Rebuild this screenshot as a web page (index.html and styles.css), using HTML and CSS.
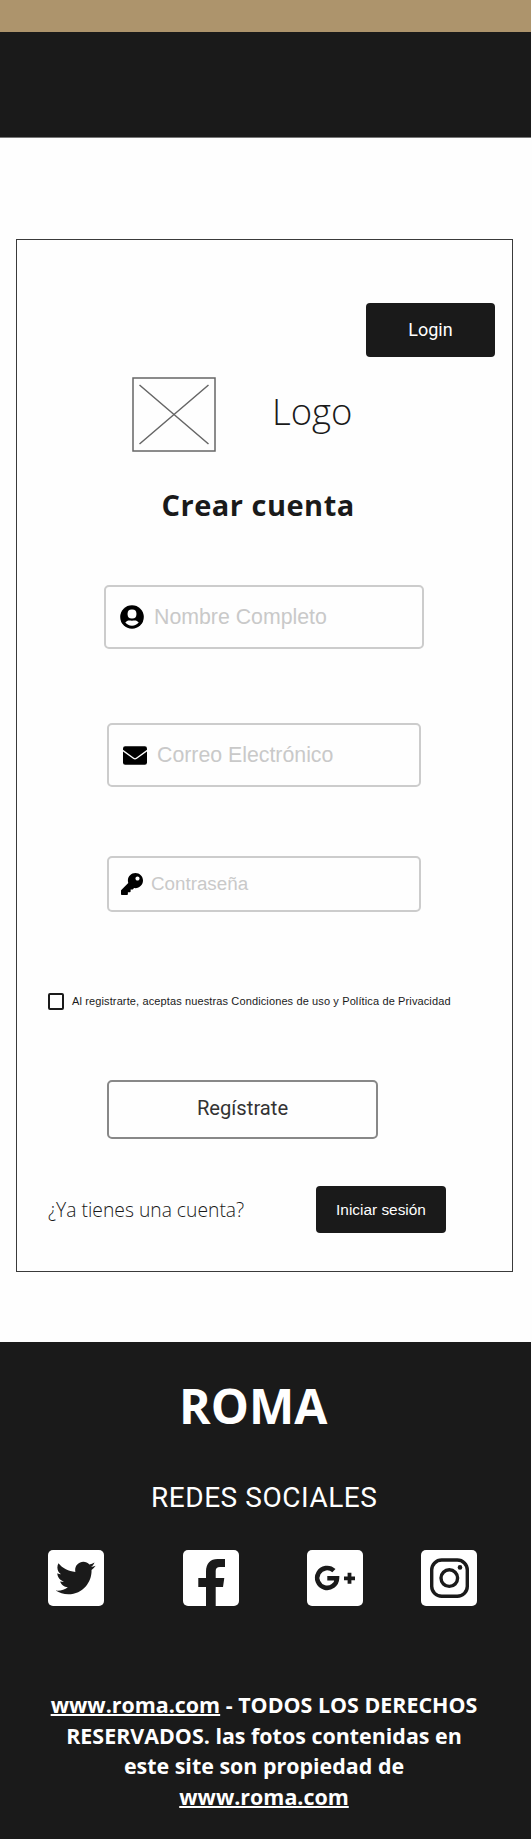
FILE: index.html
```html
<!DOCTYPE html>
<html lang="es">
<head>
<meta charset="utf-8">
<title>Crear cuenta</title>
<link rel="stylesheet" href="styles.css">
</head>
<body>
<div class="page">
  <div class="strip"></div>
  <header class="header"></header>
  <main class="panel">
    <button class="btn login">Login</button>
    <div class="brand">
      <svg class="placeholder" viewBox="0 0 84 75"><rect x="1" y="1" width="82" height="73"/><path d="M7.500 8l69 59M76.500 8l-69 59"/></svg>
      <span class="logo">Logo</span>
    </div>
    <h1 class="title"><span>Crear cuenta</span></h1>
    <div class="field name">
      <svg class="icon" width="24" height="24" viewBox="0 0 24 24"><circle cx="12" cy="12" r="11.800"/><rect class="cut" x="7.600" y="4.400" width="8.800" height="9" rx="4"/><path class="cut" d="M5.300 17.600c1.500-2.300 3.800-2.500 6.700-1.800 2.900-.7 5.200-.5 6.700 1.800-1.500 2-4 3.200-6.700 3.200s-5.200-1.200-6.700-3.200z"/></svg>
      <span>Nombre Completo</span>
    </div>
    <div class="field mail">
      <svg class="icon" width="24" height="19" viewBox="0 0 24 19"><rect y=".3" width="24" height="18.400" rx="2.200"/><path class="fold" d="M-.5 4.200L10.500 12.300q1.500 1.100 3 0L24.500 4.200"/></svg>
      <span>Correo Electrónico</span>
    </div>
    <div class="field pass">
      <svg class="icon" width="22" height="22" viewBox="0 0 512 512"><path d="M512 176.001C512 273.203 433.202 352 336 352c-11.220 0-22.190-1.062-32.827-3.069l-24.012 27.014A23.999 23.999 0 0 1 261.223 384H224v40c0 13.255-10.745 24-24 24h-40v40c0 13.255-10.745 24-24 24H24c-13.255 0-24-10.745-24-24v-78.059c0-6.365 2.529-12.470 7.029-16.971l161.802-161.802C163.108 213.814 160 195.271 160 176 160 78.798 238.797.001 335.999 0 433.488-.001 512 78.511 512 176.001zM336 128c0 26.510 21.490 48 48 48s48-21.490 48-48-21.490-48-48-48-48 21.490-48 48z"/></svg>
      <span>Contraseña</span>
    </div>
    <div class="terms"><span class="box"></span><span>Al registrarte, aceptas nuestras Condiciones de uso y Política de Privacidad</span></div>
    <button class="register">Regístrate</button>
    <div class="account">
      <span class="question">¿Ya tienes una cuenta?</span>
      <button class="btn signin">Iniciar sesión</button>
    </div>
  </main>
  <footer class="footer">
    <h2 class="roma">ROMA</h2>
    <p class="redes">REDES SOCIALES</p>
    <div class="social">
      <svg viewBox="0 0 56 56"><rect width="56" height="56" rx="5"/><path class="ink" transform="translate(7.700 8.100) scale(.078)" d="M459.370 151.716c.325 4.548.325 9.097.325 13.645 0 138.720-105.583 298.558-298.558 298.558-59.452 0-114.680-17.219-161.137-47.106 8.447.974 16.568 1.299 25.340 1.299 49.055 0 94.213-16.568 130.274-44.832-46.132-.975-84.792-31.188-98.112-72.772 6.498.974 12.995 1.624 19.818 1.624 9.421 0 18.843-1.300 27.614-3.573-48.081-9.747-84.143-51.980-84.143-102.985v-1.299c13.969 7.797 30.214 12.670 47.431 13.319-28.264-18.843-46.781-51.005-46.781-87.391 0-19.492 5.197-37.360 14.294-52.954 51.655 63.675 129.300 105.258 216.365 109.807-1.624-7.797-2.599-15.918-2.599-24.040 0-57.828 46.782-104.934 104.934-104.934 30.213 0 57.502 12.670 76.670 33.137 23.715-4.548 46.456-13.320 66.599-25.340-7.798 24.366-24.366 44.833-46.132 57.827 21.117-2.273 41.584-8.122 60.426-16.243-14.292 20.791-32.161 39.308-52.628 54.253z"/></svg>
      <svg viewBox="0 0 56 56"><rect width="56" height="56" rx="5"/><path class="ink" d="M23 56V37H15.300V28H23V21.500C23 13.500 27.500 9 34.500 9H42V17H37C34 17 32.700 18.500 32.700 21V28H41.300L40 37H32.700V56z"/></svg>
      <svg viewBox="0 0 56 56"><rect width="56" height="56" rx="5"/><path class="line g" d="M26.900 20.700A9.900 9.900 0 1 0 30 28.200H20.300"/><path class="line plus" d="M37 28.300H48M42.500 22.800V33.800"/></svg>
      <svg viewBox="0 0 56 56"><rect width="56" height="56" rx="5"/><rect class="line ig" x="10.700" y="10" width="35.600" height="36.300" rx="10"/><circle class="line ig" cx="28.300" cy="28.100" r="8.300"/><circle class="ink" cx="39" cy="17.400" r="2.300"/></svg>
    </div>
    <p class="rights"><u>www.roma.com</u> - TODOS LOS DERECHOS<br>RESERVADOS. las fotos contenidas en<br>este site son propiedad de<br><u>www.roma.com</u></p>
  </footer>
</div>
</body>
</html>
```
FILE: styles.css
```css
* { box-sizing: border-box; margin: 0; padding: 0; }
body { background: #fefefe; color: #1a1a1a; font-family: "Open Sans", sans-serif; }
.page { width: 532px; height: 1839px; display: flex; flex-direction: column; overflow: hidden; }
.strip { height: 32px; width: 531px; background: #ad946c; }
.header { height: 106px; width: 531px; background: #1a1a1a; border-bottom: 1px solid #777; }
.panel { width: 497px; height: 1033px; margin: 101px 0 0 16px; border: 1px solid #3a3a3a; display: flex; flex-direction: column; align-items: flex-start; flex-shrink: 0; }
button { font-family: Roboto, "Liberation Sans", sans-serif; }
.btn { background: #1a1a1a; color: #fff; border: 0; border-radius: 4px; }
.login { width: 129px; height: 54px; margin: 63px 0 0 349px; padding-bottom: 2px; font-size: 18px; }
.brand { display: flex; height: 75px; margin: 20px 0 0 115px; }
.placeholder { width: 84px; height: 75px; fill: none; stroke: #666; stroke-width: 1.5; }
.logo { margin: 9px 0 0 56px; font-size: 36.5px; line-height: 50px; font-weight: 300; }
.title { margin: 33px 0 0 144.5px; font-size: 29px; line-height: 40px; font-weight: 700; letter-spacing: .5px; }
.field { display: flex; align-items: center; width: 314px; border: 2px solid #ccc; border-radius: 5px; font: 20px/30px "Liberation Sans", sans-serif; color: #c9c9c9; }
.icon { fill: #000; flex: none; }
.cut { fill: #fefefe; }
.fold { fill: none; stroke: #fefefe; stroke-width: 1.4; }
.name { width: 320px; height: 64px; margin: 60px 0 0 87px; padding-left: 14px; gap: 10px; font-size: 21.3px; }
.mail { height: 64px; margin: 74px 0 0 90px; padding-left: 14px; gap: 10px; font-size: 21.3px; }
.pass { height: 56px; margin: 69px 0 0 90px; padding: 0 0 1px 12px; gap: 8px; font-size: 18.8px; }
.terms { display: flex; align-items: center; gap: 8px; height: 17px; margin: 81px 0 0 31px; font: 11px/17px "Liberation Sans", sans-serif; letter-spacing: .123px; white-space: nowrap; }
.box { width: 16px; height: 17px; border: 2px solid #1a1a1a; border-radius: 2px; }
.register { width: 271px; height: 59px; margin: 70px 0 0 90px; padding-bottom: 3px; border: 2px solid #888; border-radius: 5px; background: none; color: #333; font-size: 20.2px; }
.account { display: flex; align-items: center; height: 47px; margin: 47px 0 0 31px; }
.question { width: 268px; font-size: 19.3px; font-weight: 300; }
.signin { width: 130px; height: 47px; font: 15.4px "Liberation Sans", sans-serif; }
.footer { width: 531px; height: 497px; margin-top: 70px; padding-top: 34px; background: #1a1a1a; color: #fff; flex-shrink: 0; }
.roma { padding-left: 179px; font-size: 48px; line-height: 60px; font-weight: 700; }
.redes { margin-top: 42px; padding-left: 151px; font: 28px/40px Roboto, sans-serif; letter-spacing: .54px; white-space: nowrap; }
.social { display: grid; grid-template-columns: 135.5px 124px 114px 56px; margin: 32px 0 0 47.5px; }
.social svg { width: 56px; height: 56px; fill: #fff; }
.social .ink { fill: #1a1a1a; }
.social .line { fill: none; stroke: #1a1a1a; stroke-width: 3.4; }
.social .g { stroke-width: 4.6; }
.social .plus { stroke-width: 3.8; }
.rights { width: 528px; margin-top: 84px; font-size: 21.43px; line-height: 30.6px; font-weight: 700; text-align: center; }
.rights u { text-decoration-thickness: 2px; }
```
